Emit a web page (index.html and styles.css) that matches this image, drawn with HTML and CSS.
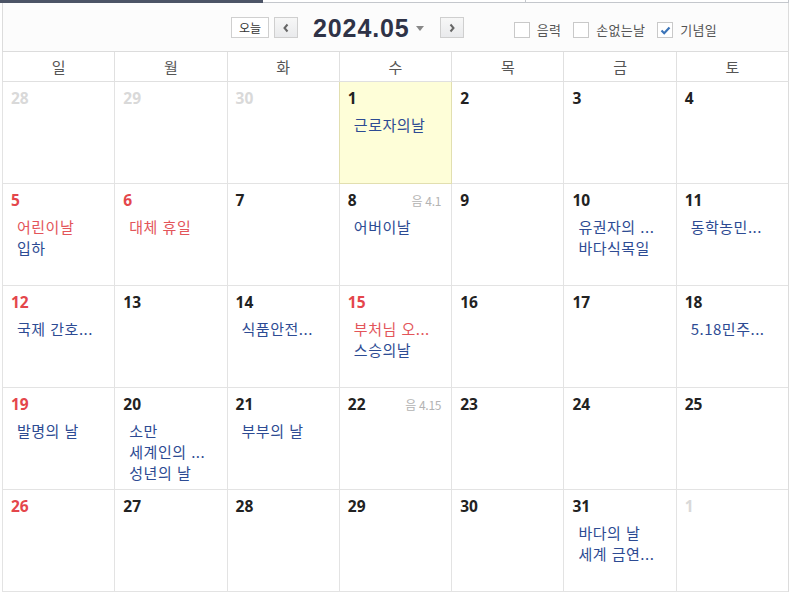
FILE: index.html
```html
<!DOCTYPE html>
<html lang="ko">
<head>
<meta charset="utf-8">
<title>2024.05</title>
<link rel="stylesheet" href="styles.css">
</head>
<body>
<div class="tabs"><div class="tab active"></div><div class="tab"></div><div class="tab last"></div></div>
<div class="cal">
  <div class="toolbar">
    <button class="btn today-btn">오늘</button>
    <button class="btn arrow"><svg width="8" height="10" viewBox="0 0 8 10"><path d="M5.5 1.5 2.5 5l3 3.5" fill="none" stroke="#666" stroke-width="2"/></svg></button>
    <div class="title">2024.05</div>
    <svg class="caret" width="8" height="5" viewBox="0 0 8 5"><path d="M0 0h8L4 5z" fill="#888"/></svg>
    <button class="btn arrow"><svg width="8" height="10" viewBox="0 0 8 10"><path d="M2.5 1.5 5.5 5l-3 3.5" fill="none" stroke="#666" stroke-width="2"/></svg></button>
    <div class="checks">
      <label class="chk"><span class="box"></span>음력</label>
      <label class="chk"><span class="box"></span>손없는날</label>
      <label class="chk"><span class="box on"><svg width="11" height="9" viewBox="0 0 11 9"><path d="M1.5 4.5 4.2 7.2 9.5 1.5" fill="none" stroke="#3b74b8" stroke-width="2.2"/></svg></span>기념일</label>
    </div>
  </div>
  <div class="dow">
    <div>일</div><div>월</div><div>화</div><div>수</div><div>목</div><div>금</div><div>토</div>
  </div>
  <div class="grid">
    <div class="cell other"><div class="top"><span class="num">28</span></div></div>
    <div class="cell other"><div class="top"><span class="num">29</span></div></div>
    <div class="cell other"><div class="top"><span class="num">30</span></div></div>
    <div class="cell today"><div class="top"><span class="num">1</span></div><div class="evs"><div class="ev">근로자의날</div></div></div>
    <div class="cell"><div class="top"><span class="num">2</span></div></div>
    <div class="cell"><div class="top"><span class="num">3</span></div></div>
    <div class="cell"><div class="top"><span class="num">4</span></div></div>

    <div class="cell sun"><div class="top"><span class="num">5</span></div><div class="evs"><div class="ev red">어린이날</div><div class="ev">입하</div></div></div>
    <div class="cell sun"><div class="top"><span class="num">6</span></div><div class="evs"><div class="ev red">대체 휴일</div></div></div>
    <div class="cell"><div class="top"><span class="num">7</span></div></div>
    <div class="cell"><div class="top"><span class="num">8</span><span class="lunar">음 4.1</span></div><div class="evs"><div class="ev">어버이날</div></div></div>
    <div class="cell"><div class="top"><span class="num">9</span></div></div>
    <div class="cell"><div class="top"><span class="num">10</span></div><div class="evs"><div class="ev">유권자의 ...</div><div class="ev">바다식목일</div></div></div>
    <div class="cell"><div class="top"><span class="num">11</span></div><div class="evs"><div class="ev">동학농민...</div></div></div>

    <div class="cell sun"><div class="top"><span class="num">12</span></div><div class="evs"><div class="ev">국제 간호...</div></div></div>
    <div class="cell"><div class="top"><span class="num">13</span></div></div>
    <div class="cell"><div class="top"><span class="num">14</span></div><div class="evs"><div class="ev">식품안전...</div></div></div>
    <div class="cell sun"><div class="top"><span class="num">15</span></div><div class="evs"><div class="ev red">부처님 오...</div><div class="ev">스승의날</div></div></div>
    <div class="cell"><div class="top"><span class="num">16</span></div></div>
    <div class="cell"><div class="top"><span class="num">17</span></div></div>
    <div class="cell"><div class="top"><span class="num">18</span></div><div class="evs"><div class="ev">5.18민주...</div></div></div>

    <div class="cell sun"><div class="top"><span class="num">19</span></div><div class="evs"><div class="ev">발명의 날</div></div></div>
    <div class="cell"><div class="top"><span class="num">20</span></div><div class="evs"><div class="ev">소만</div><div class="ev">세계인의 ...</div><div class="ev">성년의 날</div></div></div>
    <div class="cell"><div class="top"><span class="num">21</span></div><div class="evs"><div class="ev">부부의 날</div></div></div>
    <div class="cell"><div class="top"><span class="num">22</span><span class="lunar">음 4.15</span></div></div>
    <div class="cell"><div class="top"><span class="num">23</span></div></div>
    <div class="cell"><div class="top"><span class="num">24</span></div></div>
    <div class="cell"><div class="top"><span class="num">25</span></div></div>

    <div class="cell sun"><div class="top"><span class="num">26</span></div></div>
    <div class="cell"><div class="top"><span class="num">27</span></div></div>
    <div class="cell"><div class="top"><span class="num">28</span></div></div>
    <div class="cell"><div class="top"><span class="num">29</span></div></div>
    <div class="cell"><div class="top"><span class="num">30</span></div></div>
    <div class="cell"><div class="top"><span class="num">31</span></div><div class="evs"><div class="ev">바다의 날</div><div class="ev">세계 금연...</div></div></div>
    <div class="cell other"><div class="top"><span class="num">1</span></div></div>
  </div>
</div>
</body>
</html>
```

FILE: styles.css
```css
* { box-sizing: border-box; }
html, body { margin: 0; padding: 0; background: #fff; }
body {
  font-family: "Noto Sans CJK KR", "Noto Sans", sans-serif;
  color: #222;
  width: 792px;
  height: 596px;
  overflow: hidden;
}
.tabs { display: flex; height: 3px; }
.tab { flex: 1; border-bottom: 1px solid #c4c7cc; border-right: 1px solid #c4c7cc; }
.tab.active { background: #4c5466; border-color: #4c5466; }
.tab.last { margin-right: 3px; }

.cal { margin-left: 2px; width: 787px; }

.toolbar {
  height: 49px;
  border-left: 1px solid #dcdcdc;
  border-right: 1px solid #dcdcdc;
  border-bottom: 1px solid #dcdcdc;
  background: #fcfcfc;
  display: flex;
  align-items: center;
  padding-left: 228px;
  padding-top: 1px;
}
.btn {
  font-family: inherit;
  height: 21px;
  padding: 0;
  border: 1px solid #cfcfcf;
  background: #fff;
  display: flex;
  align-items: center;
  justify-content: center;
  margin: 0;
}
.today-btn { width: 38px; font-size: 12px; color: #333; line-height: 19px; margin-right: 5px; }
.arrow { width: 24px; background: linear-gradient(#f7f7f7, #e9eaec); }
.title {
  font-family: "Liberation Sans", Arial, sans-serif;
  font-weight: 700;
  font-size: 25px;
  letter-spacing: 0.9px;
  color: #2f3347;
  margin-left: 15px;
  line-height: 30px;
}
.caret { margin-left: 6px; margin-right: 16px; margin-top: 1px; }
.checks { display: flex; align-items: center; margin-left: 50px; margin-top: 5px; }
.chk {
  display: flex;
  align-items: center;
  font-size: 13px;
  color: #555;
  line-height: 18px;
  margin-right: 12px;
  letter-spacing: 0.3px;
}
.box {
  width: 16px;
  height: 16px;
  border: 1px solid #c9c9c9;
  background: #fff;
  margin-right: 7px;
  display: flex;
  align-items: center;
  justify-content: center;
}

.dow {
  display: grid;
  grid-template-columns: repeat(7, 1fr);
  height: 30px;
  border-right: 1px solid #dcdcdc;
  border-bottom: 1px solid #e0e0e0;
}
.dow div {
  border-left: 1px solid #e0e0e0;
  text-align: center;
  font-size: 15px;
  line-height: 29px;
  color: #555;
}

.grid {
  display: grid;
  grid-template-columns: repeat(7, 1fr);
  grid-auto-rows: 102px;
  border-right: 1px solid #dcdcdc;
}
.cell {
  border-left: 1px solid #e3e3e3;
  border-bottom: 1px solid #e3e3e3;
  padding: 6px 10px 0 8px;
}
.top { display: flex; justify-content: space-between; align-items: baseline; height: 20px; }
.num {
  font-family: "Noto Sans", sans-serif;
  font-weight: 700;
  font-size: 15.5px;
  line-height: 20px;
  color: #222;
}
.other .num { color: #d9d9d9; }
.sun .num { color: #e4464b; }
.lunar { font-size: 12px; color: #b3b3b3; line-height: 20px; letter-spacing: -0.3px; }
.today { background: #fefed8; border-left-color: #e2dfb0; border-bottom-color: #e2dfb0; box-shadow: 1px 0 0 #e2dfb0; position: relative; }
.evs { margin-top: 6px; padding-left: 6px; }
.ev { font-size: 15px; line-height: 21px; color: #2d4b93; white-space: nowrap; letter-spacing: 0.5px; }
.ev.red { color: #e3555a; }
```
